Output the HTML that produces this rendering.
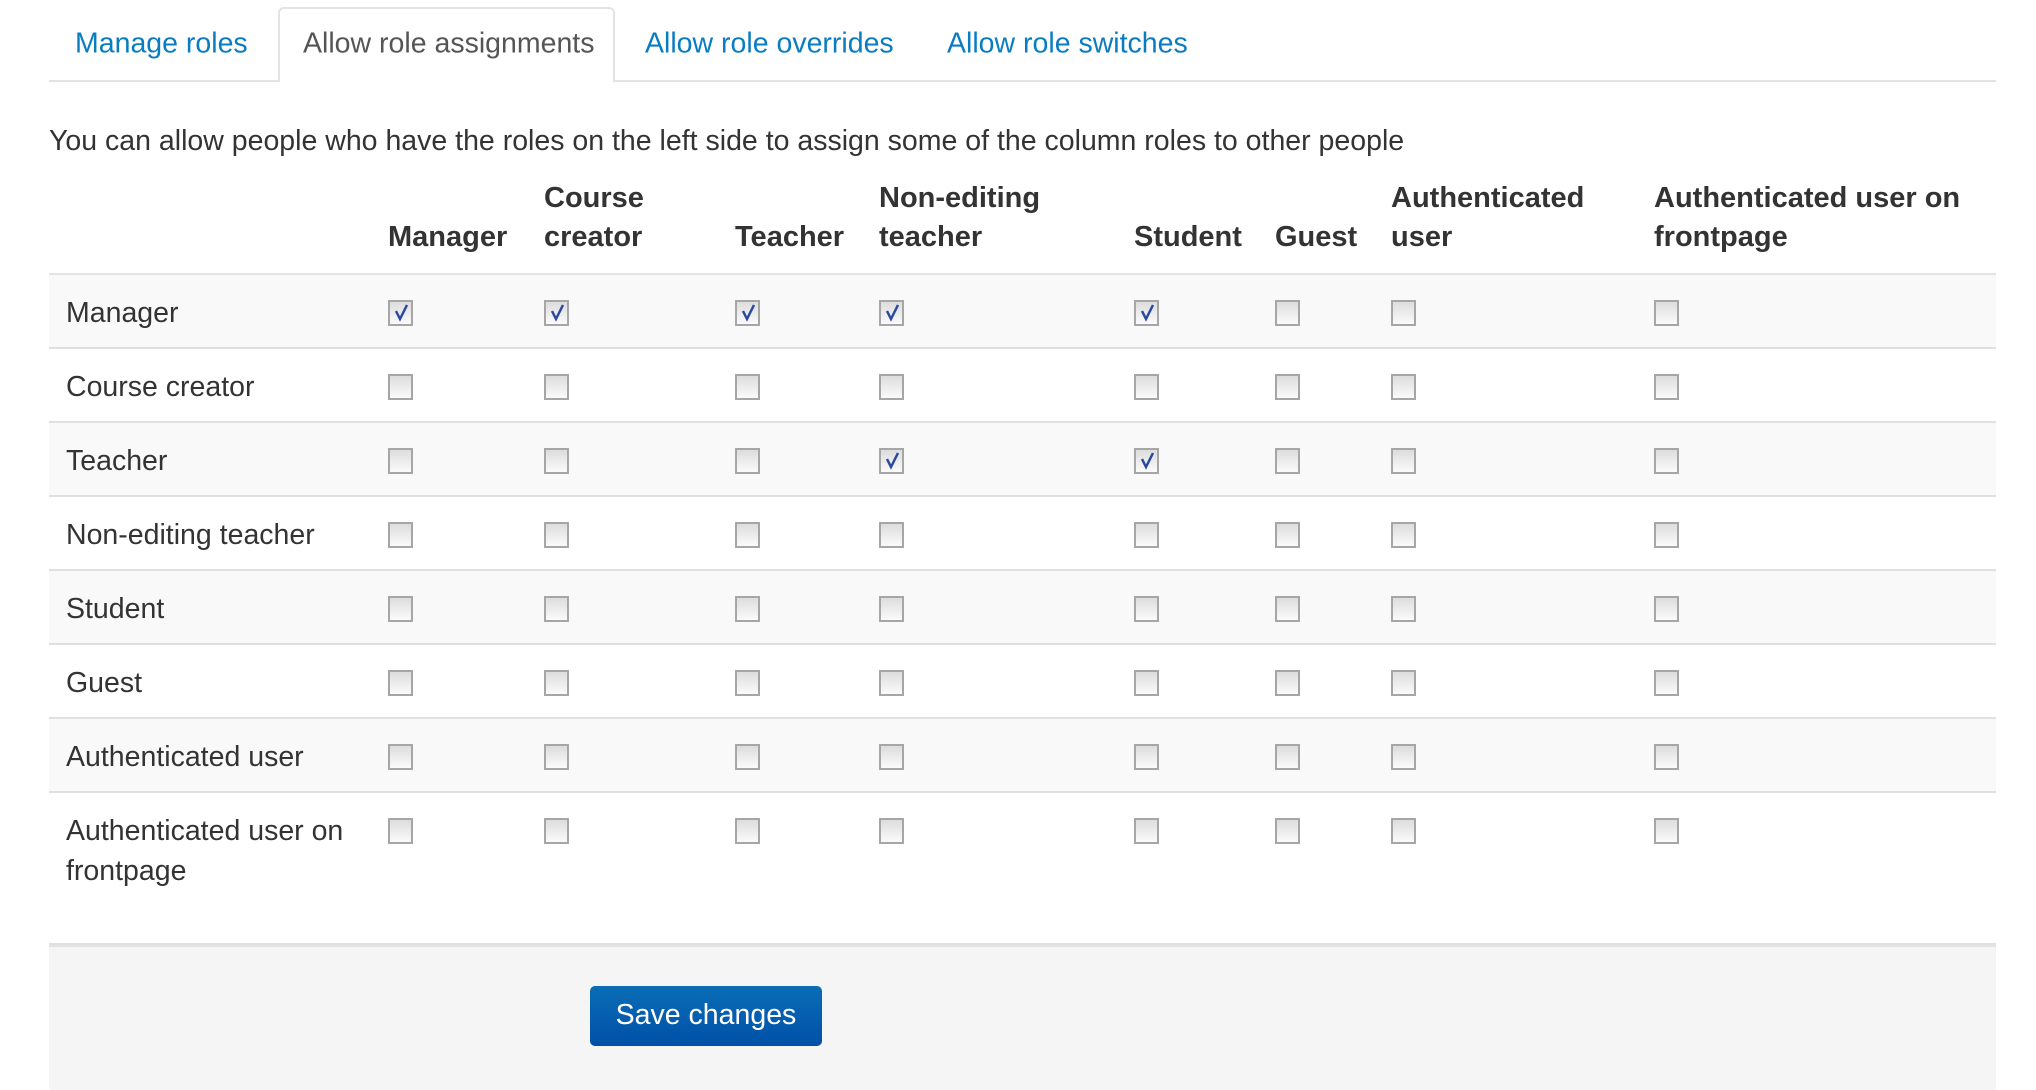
<!DOCTYPE html>
<html><head><meta charset="utf-8"><style>
*{margin:0;padding:0;box-sizing:border-box}
body{width:2036px;height:1090px;background:#fff;font-family:"Liberation Sans",Arial,sans-serif;color:#333;position:relative;overflow:hidden;font-size:28.5px}
.a{position:absolute;white-space:nowrap}
.tab{position:absolute;top:44px;transform:translateY(-50%);color:#0a7cc1;font-size:28.5px;white-space:nowrap}
.act{position:absolute;left:278px;top:7px;width:337px;height:75px;border:2px solid #e3e3e3;border-bottom:none;border-radius:6px 6px 0 0;background:#fff}
.line{position:absolute;left:49px;width:1947px;height:2px;background:#e3e3e3}
.row{position:absolute;left:49px;width:1947px;height:74px;border-bottom:2px solid #e0e0e0}
.odd{background:#f9f9f9}
.lbl{position:absolute;left:17px;top:18px;font-size:28.5px;color:#333;line-height:40px;white-space:nowrap}
.h{position:absolute;font-weight:bold;font-size:29px;line-height:39px;color:#333;white-space:nowrap}
.cb{position:absolute;width:25px;height:26px;border:2px solid #a6a6a6;background:linear-gradient(#ddd,#fafafa);top:25px}
.cb svg{position:absolute;left:3px;top:2px}
.btn{position:absolute;left:590px;top:986px;width:232px;height:60px;border-radius:5px;background:linear-gradient(#0a6db5,#0050a8);color:#fff;font-size:28.5px;text-align:center;line-height:58px}
</style></head><body>
<div class="line" style="top:80px"></div>
<div class="act"></div>
<div class="tab" style="left:75px">Manage roles</div>
<div class="tab" style="left:303px;color:#555">Allow role assignments</div>
<div class="tab" style="left:645px">Allow role overrides</div>
<div class="tab" style="left:947px">Allow role switches</div>
<div class="a" style="left:49px;top:125px;color:#333">You can allow people who have the roles on the left side to assign some of the column roles to other people</div>

<div class="h" style="left:388px;top:218px">Manager</div>
<div class="h" style="left:544px;top:179px">Course<br>creator</div>
<div class="h" style="left:735px;top:218px">Teacher</div>
<div class="h" style="left:879px;top:179px">Non-editing<br>teacher</div>
<div class="h" style="left:1134px;top:218px">Student</div>
<div class="h" style="left:1275px;top:218px">Guest</div>
<div class="h" style="left:1391px;top:179px">Authenticated<br>user</div>
<div class="h" style="left:1654px;top:179px">Authenticated user on<br>frontpage</div>
<div class="line" style="top:273px"></div>

<div id="rows"></div>
<script>
var labels=["Manager","Course creator","Teacher","Non-editing teacher","Student","Guest","Authenticated user","Authenticated user on<br>frontpage"];
var xs=[388,544,735,879,1134,1275,1391,1654];
var checked={0:[0,1,2,3,4],2:[3,4]};
var html="";
var chk='<svg width="17" height="18" viewBox="0 0 17 18"><path d="M3 7 L7 15 L14 1" fill="none" stroke="#2a4aa0" stroke-width="2.5"/></svg>';
for(var r=0;r<8;r++){
 var t=275+r*74;
 var ht = r==7 ? 945-t : 74;
 html+='<div class="row'+(r%2==0?' odd':'')+'" style="top:'+t+'px;height:'+ht+'px"><div class="lbl">'+labels[r]+'</div>';
 for(var c=0;c<8;c++){
  var on=checked[r]&&checked[r].indexOf(c)>=0;
  html+='<div class="cb" style="left:'+(xs[c]-49)+'px">'+(on?chk:'')+'</div>';
 }
 html+='</div>';
}
document.getElementById('rows').innerHTML=html;
</script>
<div style="position:absolute;left:49px;top:945px;width:1947px;height:145px;background:#f5f5f5;border-top:2px solid #e3e3e3"></div>
<div class="btn">Save changes</div>
</body></html>
